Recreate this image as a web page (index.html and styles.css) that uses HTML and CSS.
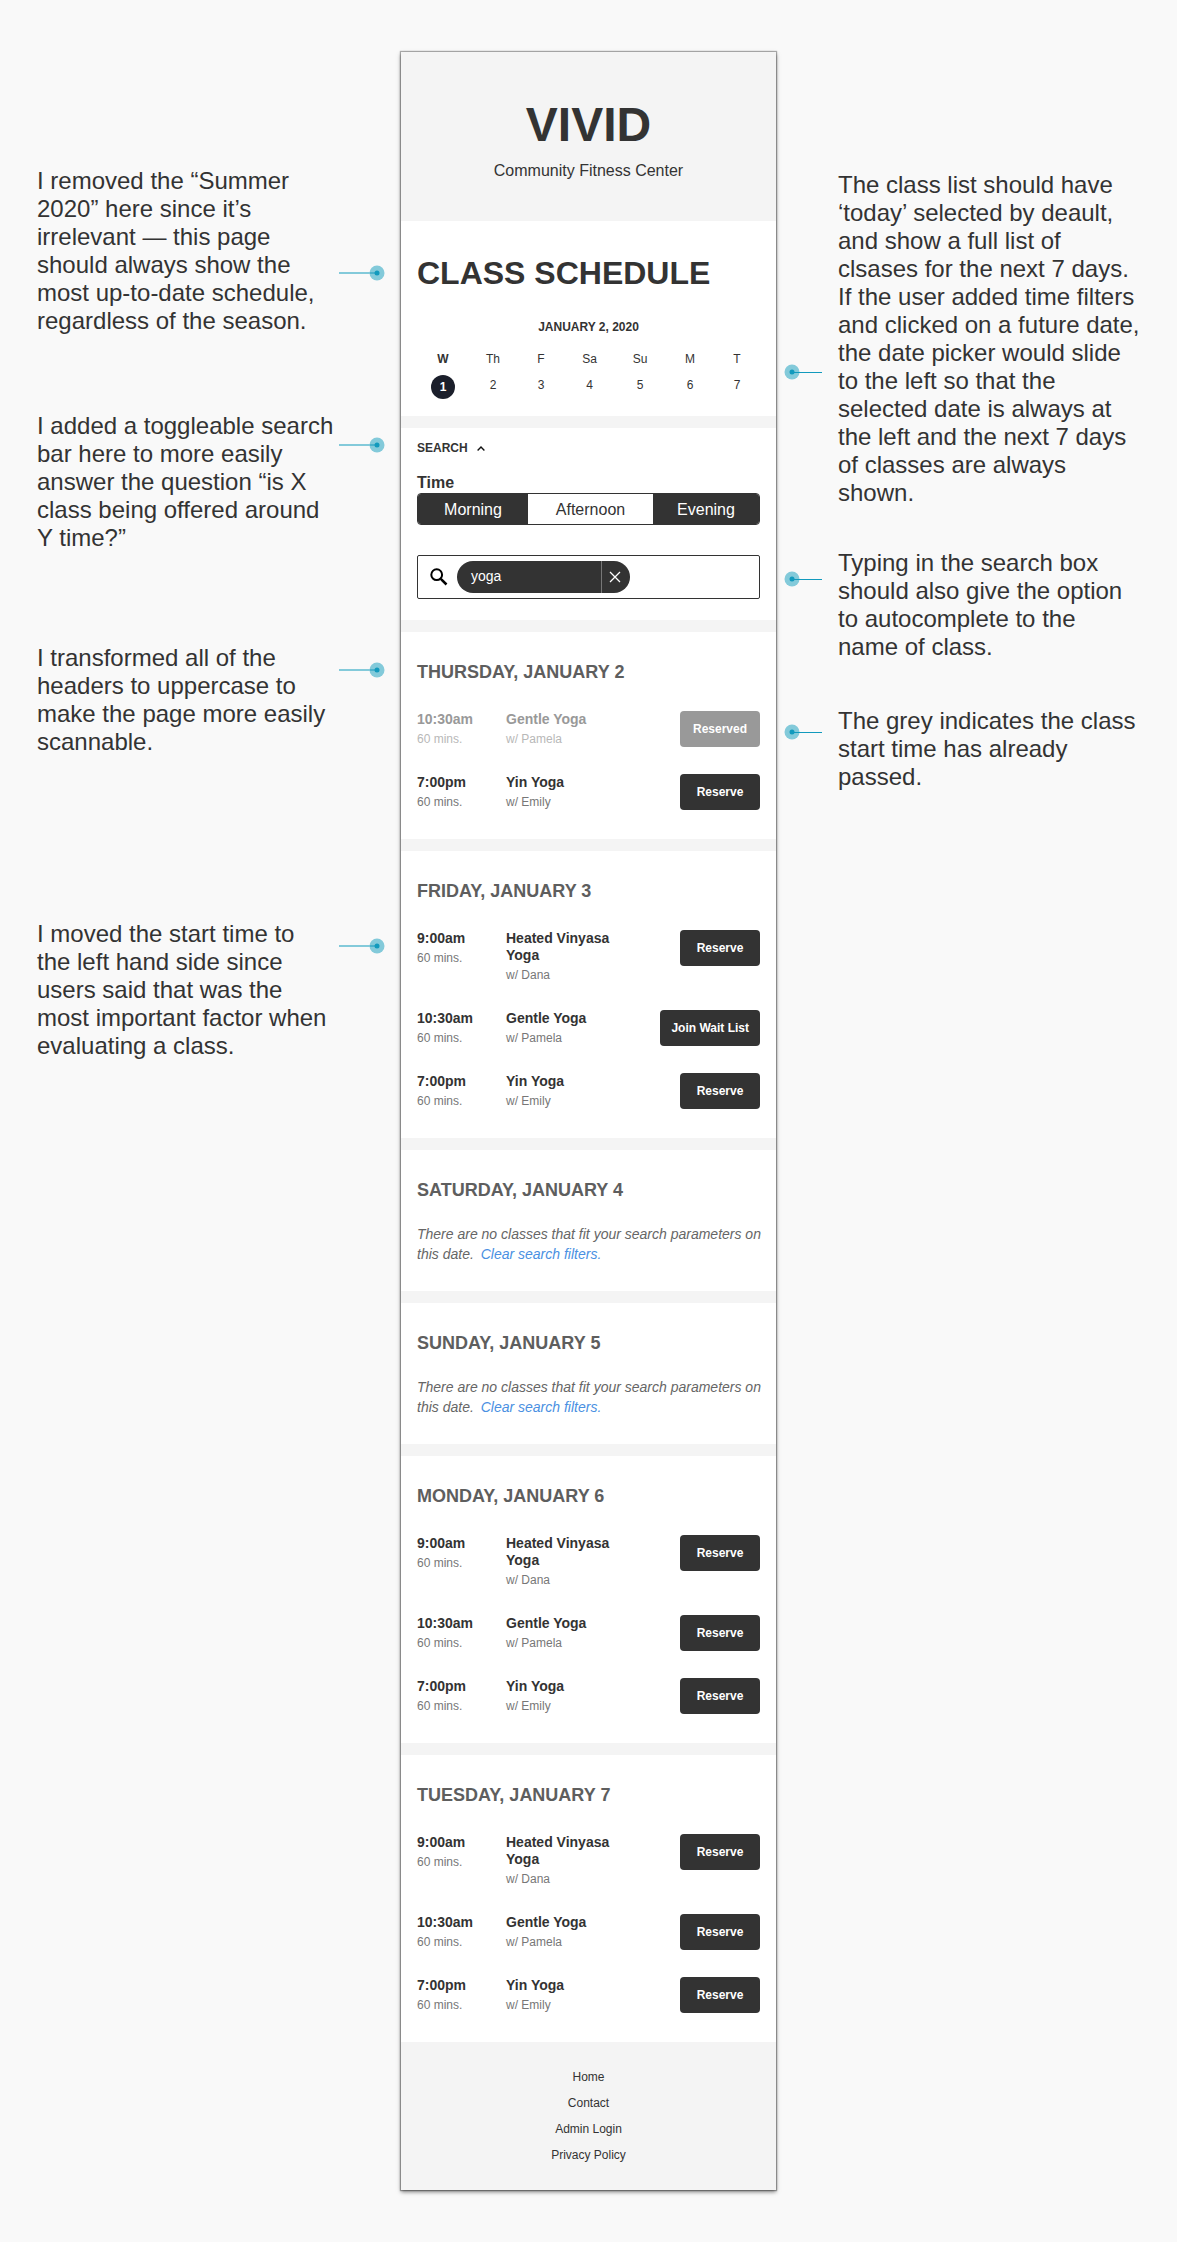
FILE: index.html
```html
<!DOCTYPE html>
<html lang="en">
<head>
<meta charset="utf-8">
<meta name="viewport" content="width=device-width, initial-scale=1">
<title>VIVID Community Fitness Center – Class Schedule</title>
<link rel="stylesheet" href="styles.css">
</head>
<body>
<svg class="sprite" aria-hidden="true">
  <symbol id="pin-left" viewBox="0 0 46 16">
    <path d="M0 8H38" stroke="#83cada" stroke-width="2"/>
    <circle cx="38" cy="8" r="7.5" fill="#83cada"/>
    <path d="M31 8H38" stroke="#4bb1cb" stroke-width="2"/>
    <circle cx="38" cy="8" r="2.5" fill="#129abd"/>
  </symbol>
  <symbol id="pin-right" viewBox="0 0 38 16">
    <circle cx="8" cy="8" r="7.5" fill="#83cada"/>
    <path d="M8 8.5H38" stroke="#129abd"/>
    <circle cx="8" cy="8" r="2.5" fill="#129abd"/>
  </symbol>
</svg>
<div class="page">
  <aside class="notes notes-left">
    <div class="note note-season">
      <p>I removed the “Summer<br>2020” here since it’s<br>irrelevant — this page<br>should always show the<br>most up-to-date schedule,<br>regardless of the season.</p>
      <svg class="pin"><use href="#pin-left"/></svg>
    </div>
    <div class="note note-toggle">
      <p>I added a toggleable search<br>bar here to more easily<br>answer the question “is X<br>class being offered around<br>Y time?”</p>
      <svg class="pin"><use href="#pin-left"/></svg>
    </div>
    <div class="note note-headers">
      <p>I transformed all of the<br>headers to uppercase to<br>make the page more easily<br>scannable.</p>
      <svg class="pin"><use href="#pin-left"/></svg>
    </div>
    <div class="note note-time">
      <p>I moved the start time to<br>the left hand side since<br>users said that was the<br>most important factor when<br>evaluating a class.</p>
      <svg class="pin"><use href="#pin-left"/></svg>
    </div>
  </aside>

  <div class="phone">
    <header class="brand">
      <h1 class="brand-name">VIVID</h1>
      <p class="brand-tag">Community Fitness Center</p>
    </header>
    <main class="sections">
      <section class="calendar">
        <h2 class="title">CLASS SCHEDULE</h2>
        <p class="month">JANUARY 2, 2020</p>
        <div class="week">
          <button class="date date-active" type="button" aria-pressed="true"><span>W</span><span class="num">1</span></button>
          <button class="date" type="button"><span>Th</span><span class="num">2</span></button>
          <button class="date" type="button"><span>F</span><span class="num">3</span></button>
          <button class="date" type="button"><span>Sa</span><span class="num">4</span></button>
          <button class="date" type="button"><span>Su</span><span class="num">5</span></button>
          <button class="date" type="button"><span>M</span><span class="num">6</span></button>
          <button class="date" type="button"><span>T</span><span class="num">7</span></button>
        </div>
      </section>

      <section class="search">
        <button class="search-toggle" type="button" aria-expanded="true">SEARCH
          <svg width="8" height="5" viewBox="0 0 8 5"><path d="M.6 4.4L4 1l3.400 3.400" fill="none" stroke="#111" stroke-width="1.400"/></svg>
        </button>
        <p class="field-name" id="time-label">Time</p>
        <div class="segments" role="group" aria-labelledby="time-label">
          <button class="segment segment-on" type="button" aria-pressed="true">Morning</button>
          <button class="segment" type="button" aria-pressed="false">Afternoon</button>
          <button class="segment segment-on" type="button" aria-pressed="true">Evening</button>
        </div>
        <div class="search-box">
          <label for="query" aria-label="Search classes">
            <svg class="lens" width="18" height="18" viewBox="0 0 18 18"><circle cx="6.700" cy="6.700" r="5.400" fill="none" stroke="#000" stroke-width="2"/><path d="M10.800 10.800L16.500 16.500" stroke="#000" stroke-width="2.500"/></svg>
          </label>
          <div class="chip">
            <span class="chip-text">yoga</span>
            <button class="chip-close" type="button" aria-label="Remove yoga">
              <svg width="12" height="12" viewBox="0 0 12 12"><path d="M1 1l10 10M11 1L1 11" stroke="#fff" stroke-width="1.300"/></svg>
            </button>
          </div>
          <input id="query" class="query" type="text">
        </div>
      </section>

      <section class="day">
        <h3 class="day-name">THURSDAY, JANUARY 2</h3>
        <ul class="classes">
          <li class="class class-past"><div><p class="main">10:30am</p><p class="sub">60 mins.</p></div><div><p class="main">Gentle Yoga</p><p class="sub">w/ Pamela</p></div><button class="action" type="button" disabled>Reserved</button></li>
          <li class="class"><div><p class="main">7:00pm</p><p class="sub">60 mins.</p></div><div><p class="main">Yin Yoga</p><p class="sub">w/ Emily</p></div><button class="action" type="button">Reserve</button></li>
        </ul>
      </section>

      <section class="day">
        <h3 class="day-name">FRIDAY, JANUARY 3</h3>
        <ul class="classes">
          <li class="class"><div><p class="main">9:00am</p><p class="sub">60 mins.</p></div><div><p class="main">Heated Vinyasa Yoga</p><p class="sub">w/ Dana</p></div><button class="action" type="button">Reserve</button></li>
          <li class="class"><div><p class="main">10:30am</p><p class="sub">60 mins.</p></div><div><p class="main">Gentle Yoga</p><p class="sub">w/ Pamela</p></div><button class="action" type="button">Join Wait List</button></li>
          <li class="class"><div><p class="main">7:00pm</p><p class="sub">60 mins.</p></div><div><p class="main">Yin Yoga</p><p class="sub">w/ Emily</p></div><button class="action" type="button">Reserve</button></li>
        </ul>
      </section>

      <section class="day">
        <h3 class="day-name">SATURDAY, JANUARY 4</h3>
        <p class="empty">There are no classes that fit your search parameters on this date. <a class="clear" href="#query">Clear search filters.</a></p>
      </section>

      <section class="day">
        <h3 class="day-name">SUNDAY, JANUARY 5</h3>
        <p class="empty">There are no classes that fit your search parameters on this date. <a class="clear" href="#query">Clear search filters.</a></p>
      </section>

      <section class="day">
        <h3 class="day-name">MONDAY, JANUARY 6</h3>
        <ul class="classes">
          <li class="class"><div><p class="main">9:00am</p><p class="sub">60 mins.</p></div><div><p class="main">Heated Vinyasa Yoga</p><p class="sub">w/ Dana</p></div><button class="action" type="button">Reserve</button></li>
          <li class="class"><div><p class="main">10:30am</p><p class="sub">60 mins.</p></div><div><p class="main">Gentle Yoga</p><p class="sub">w/ Pamela</p></div><button class="action" type="button">Reserve</button></li>
          <li class="class"><div><p class="main">7:00pm</p><p class="sub">60 mins.</p></div><div><p class="main">Yin Yoga</p><p class="sub">w/ Emily</p></div><button class="action" type="button">Reserve</button></li>
        </ul>
      </section>

      <section class="day">
        <h3 class="day-name">TUESDAY, JANUARY 7</h3>
        <ul class="classes">
          <li class="class"><div><p class="main">9:00am</p><p class="sub">60 mins.</p></div><div><p class="main">Heated Vinyasa Yoga</p><p class="sub">w/ Dana</p></div><button class="action" type="button">Reserve</button></li>
          <li class="class"><div><p class="main">10:30am</p><p class="sub">60 mins.</p></div><div><p class="main">Gentle Yoga</p><p class="sub">w/ Pamela</p></div><button class="action" type="button">Reserve</button></li>
          <li class="class"><div><p class="main">7:00pm</p><p class="sub">60 mins.</p></div><div><p class="main">Yin Yoga</p><p class="sub">w/ Emily</p></div><button class="action" type="button">Reserve</button></li>
        </ul>
      </section>
    </main>
    <footer class="footer">
      <a href="#home">Home</a>
      <a href="#contact">Contact</a>
      <a href="#admin">Admin Login</a>
      <a href="#privacy">Privacy Policy</a>
    </footer>
  </div>

  <aside class="notes notes-right">
    <div class="note note-today">
      <svg class="pin"><use href="#pin-right"/></svg>
      <p>The class list should have<br>‘today’ selected by deault,<br>and show a full list of<br>clsases for the next 7 days.<br>If the user added time filters<br>and clicked on a future date,<br>the date picker would slide<br>to the left so that the<br>selected date is always at<br>the left and the next 7 days<br>of classes are always<br>shown.</p>
    </div>
    <div class="note note-typing">
      <svg class="pin"><use href="#pin-right"/></svg>
      <p>Typing in the search box<br>should also give the option<br>to autocomplete to the<br>name of class.</p>
    </div>
    <div class="note note-grey">
      <svg class="pin"><use href="#pin-right"/></svg>
      <p>The grey indicates the class<br>start time has already<br>passed.</p>
    </div>
  </aside>
</div>
</body>
</html>
```

FILE: styles.css
```css
* {
  box-sizing: border-box;
}

body,
h1,
h2,
h3,
p,
ul {
  margin: 0;
  padding: 0;
}

body {
  background: #f9f9f9;
  color: #333;
  font-family: "Liberation Sans", Arial, sans-serif;
  font-size: 12px;
  line-height: 16px;
}

button,
input {
  margin: 0;
  padding: 0;
  border: 0;
  background: none;
  color: inherit;
  font: inherit;
}

a {
  color: inherit;
  text-decoration: none;
}

.sprite {
  position: absolute;
  width: 0;
  height: 0;
}

.page {
  display: grid;
  grid-template-columns: 1fr 375px 1fr;
  align-items: start;
  padding: 52px 0;
}

/* Margin notes */

.note {
  display: flex;
  align-items: flex-start;
  font-size: 24px;
  line-height: 28px;
  white-space: nowrap;
}

.notes-left {
  padding: 115px 16px 0 37px;
}

.notes-left .note {
  justify-content: space-between;
}

.notes-right {
  padding: 119px 16px 0 8px;
}

.notes-right .note {
  gap: 16px;
}

.pin {
  flex: none;
  width: 46px;
  height: 16px;
}

.notes-right .pin {
  width: 38px;
}

.note-season .pin {
  margin-top: 98px;
}

.note-toggle {
  margin-top: 77px;
}

.note-toggle .pin {
  margin-top: 25px;
}

.note-headers {
  margin-top: 92px;
}

.note-headers .pin {
  margin-top: 18px;
}

.note-time {
  margin-top: 164px;
}

.note-time .pin {
  margin-top: 18px;
}

.note-today .pin {
  margin-top: 193px;
}

.note-typing {
  margin-top: 42px;
}

.note-typing .pin {
  margin-top: 22px;
}

.note-grey {
  margin-top: 46px;
}

.note-grey .pin {
  margin-top: 17px;
}

/* Phone screen */

.phone {
  background: #f4f4f4;
  box-shadow: 0 0 1px 1px rgba(0, 0, 0, 0.3), 0 2px 4px rgba(0, 0, 0, 0.5);
}

.brand {
  padding: 45px 16px 40px;
  text-align: center;
}

.brand-name {
  margin-bottom: 8px;
  font-size: 48px;
  line-height: 56px;
}

.brand-tag {
  font-size: 16px;
  line-height: 20px;
}

.sections {
  display: grid;
  grid-template-columns: minmax(0, 1fr);
  gap: 12px;
}

.sections > section {
  padding-left: 16px;
  padding-right: 16px;
  background: #fff;
}

/* Calendar */

.calendar {
  padding-top: 34px;
  padding-bottom: 17px;
}

.title {
  font-size: 32px;
  line-height: 36px;
}

.month {
  margin: 28px 0 16px;
  font-weight: bold;
  text-align: center;
}

.week {
  display: grid;
  grid-template-columns: 52fr 48fr 48fr 49fr 52fr 48fr 46fr;
  align-items: start;
}

.date {
  display: flex;
  flex-direction: column;
  align-items: center;
  gap: 8px;
}

.num {
  width: 24px;
  line-height: 21px;
}

.date-active {
  font-weight: bold;
}

.date-active .num {
  border-radius: 50%;
  background: #1b1f2b;
  color: #fff;
  line-height: 24px;
}

/* Search */

.search {
  padding-top: 12px;
  padding-bottom: 21px;
}

.search-toggle {
  display: flex;
  align-items: center;
  gap: 9px;
  font-weight: bold;
}

.field-name {
  margin-top: 17px;
  font-size: 16px;
  font-weight: bold;
  line-height: 20px;
}

.segments {
  display: grid;
  grid-template-columns: 110fr 125fr 106fr;
  height: 32px;
  border: 1px solid #333;
  border-radius: 4px;
  overflow: hidden;
}

.segment {
  padding-top: 2px;
  font-size: 16px;
}

.segment-on {
  background: #333;
  color: #fff;
}

.search-box {
  display: flex;
  align-items: center;
  height: 44px;
  margin-top: 30px;
  padding: 0 12px;
  border: 1px solid #333;
  border-radius: 2px;
}

.lens {
  display: block;
}

.chip {
  display: flex;
  flex: none;
  width: 173px;
  height: 32px;
  margin-left: 9px;
  border-radius: 16px;
  background: #333;
  color: #fff;
  font-size: 14px;
  line-height: 31px;
}

.chip-text {
  flex: 1;
  padding-left: 14px;
}

.chip-close {
  display: flex;
  align-items: center;
  width: 29px;
  padding-left: 7px;
  border-left: 1px solid #777;
}

.query {
  flex: 1;
  min-width: 0;
  height: 32px;
  padding-left: 8px;
  font-size: 14px;
  outline: 0;
}

/* Day listings */

.day {
  padding-top: 29px;
  padding-bottom: 27px;
}

.day-name {
  margin-bottom: 23px;
  color: #5e5e5e;
  font-size: 18px;
  line-height: 22px;
}

.classes {
  display: grid;
  gap: 27px;
  padding: 5px 0 2px;
  list-style: none;
}

.class {
  display: grid;
  grid-template-columns: 89px 1fr auto;
  align-items: start;
}

.main {
  max-width: 120px;
  font-size: 14px;
  font-weight: bold;
  line-height: 17px;
}

.sub {
  padding-top: 3px;
  color: #777;
  line-height: 16px;
}

.action {
  min-width: 80px;
  height: 36px;
  padding: 0 11px;
  border-radius: 4px;
  background: #333;
  color: #fff;
  font-weight: bold;
}

.class-past .main {
  color: #999;
}

.class-past .sub {
  color: #b8b8b8;
}

.class-past .action {
  background: #999;
}

.empty {
  margin-right: -8px;
  color: #666;
  font-size: 14px;
  font-style: italic;
  line-height: 20px;
}

.clear {
  display: inline-block;
  margin-left: 3px;
  color: #4a90e2;
}

/* Footer */

.footer {
  display: flex;
  flex-direction: column;
  align-items: center;
  padding: 22px 0;
  line-height: 26px;
}

@media (max-width: 1120px) {
  .page {
    grid-template-columns: minmax(0, 375px);
    justify-content: center;
    gap: 32px;
  }

  .notes {
    padding: 0 16px;
  }

  .note {
    margin-top: 24px;
    white-space: normal;
  }

  .pin {
    display: none;
  }
}
```
